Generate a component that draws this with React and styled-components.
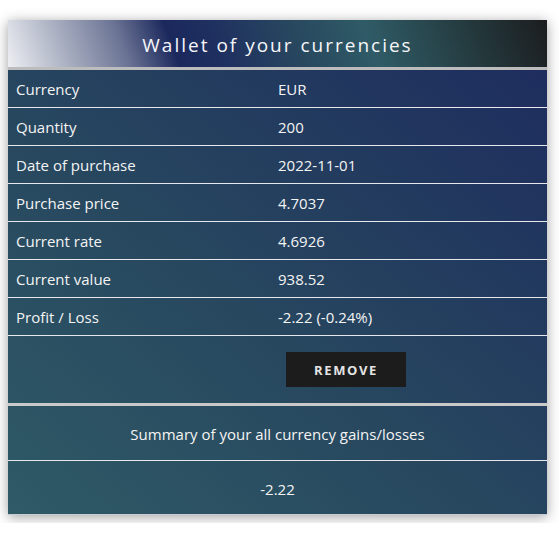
import React from "react";
import styled, { createGlobalStyle } from "styled-components";

const Global = createGlobalStyle`
  html, body { margin: 0; padding: 0; background: #ffffff; }
  body { padding: 20px 8px 8px 8px; font-family: "Open Sans", "Noto Sans", sans-serif; }
  * { box-sizing: border-box; }
`;

const Card = styled.section`
  width: 539px;
  display: flex;
  flex-direction: column;
  box-shadow: 0 2px 12px rgba(0, 0, 0, 0.38);
  color: #f4f4f4;
`;

const Header = styled.h1`
  margin: 0;
  height: 50px;
  display: flex;
  align-items: center;
  justify-content: center;
  padding-top: 2px;
  font-size: 19px;
  font-weight: 400;
  letter-spacing: 2px;
  color: #f6f6fa;
  background: linear-gradient(
    70deg,
    #eceef2 0%,
    #a4aabd 12%,
    #6a7394 22%,
    #1b285c 31%,
    #1f3160 40%,
    #28485f 54%,
    #2f5b66 67%,
    #243a3e 85%,
    #1c1d20 100%
  );
  border-bottom: 3px solid #bcbcbc;
`;

const Body = styled.div`
  display: flex;
  flex-direction: column;
  background: linear-gradient(to top right, #2f5a66 0%, #27475f 45%, #1e2d5e 100%);
`;

const Row = styled.div`
  display: grid;
  grid-template-columns: 262px 1fr;
  align-items: center;
  height: 38px;
  padding-top: 1px;
  border-bottom: 1px solid #e6e8ee;
  font-size: 15px;
`;

const Cell = styled.div`
  padding: 0 8px;
`;

const ActionRow = styled.div`
  display: grid;
  grid-template-columns: 262px 1fr;
  align-items: center;
  height: 70px;
  border-bottom: 3px solid #c9c9c9;
`;

const RemoveButton = styled.button`
  margin-left: 16px;
  width: 120px;
  height: 35px;
  border: none;
  background: #1c1c1c;
  color: #e4e4e4;
  font-family: "Open Sans", "Noto Sans", sans-serif;
  font-weight: 700;
  font-size: 13px;
  letter-spacing: 1.6px;
  cursor: pointer;
`;

const SummaryRow = styled.div`
  display: flex;
  align-items: center;
  justify-content: center;
  height: ${(p) => p.$h}px;
  padding-top: 2px;
  border-bottom: 1px solid ${(p) => p.$line};
  font-size: 15px;
`;

const rows = [
  ["Currency", "EUR"],
  ["Quantity", "200"],
  ["Date of purchase", "2022-11-01"],
  ["Purchase price", "4.7037"],
  ["Current rate", "4.6926"],
  ["Current value", "938.52"],
  ["Profit / Loss", "-2.22 (-0.24%)"],
];

export default function App() {
  return (
    <>
      <Global />
      <Card>
        <Header>Wallet of your currencies</Header>
        <Body>
          {rows.map(([k, v]) => (
            <Row key={k}>
              <Cell>{k}</Cell>
              <Cell>{v}</Cell>
            </Row>
          ))}
          <ActionRow>
            <span />
            <div>
              <RemoveButton>REMOVE</RemoveButton>
            </div>
          </ActionRow>
          <SummaryRow $h={55} $line="#e6e8ee">Summary of your all currency gains/losses</SummaryRow>
          <SummaryRow $h={54} $line="#c8ccd2">-2.22</SummaryRow>
        </Body>
      </Card>
    </>
  );
}
